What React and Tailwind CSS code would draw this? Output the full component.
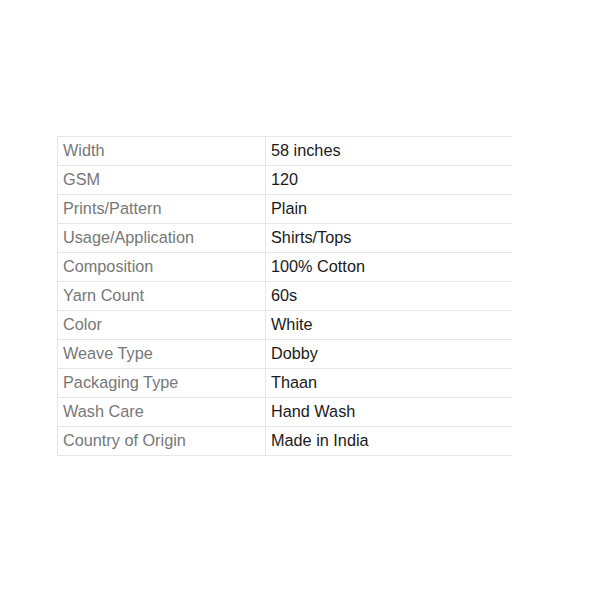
import React from "react";

const rows = [
  ["Width", "58 inches"],
  ["GSM", "120"],
  ["Prints/Pattern", "Plain"],
  ["Usage/Application", "Shirts/Tops"],
  ["Composition", "100% Cotton"],
  ["Yarn Count", "60s"],
  ["Color", "White"],
  ["Weave Type", "Dobby"],
  ["Packaging Type", "Thaan"],
  ["Wash Care", "Hand Wash"],
  ["Country of Origin", "Made in India"],
];

export default function App() {
  return (
    <div className="w-[594px] h-[596px] bg-white pt-[136px] pl-[57px]" style={{ fontFamily: '"Liberation Sans", Arial, sans-serif' }}>
      <div className="w-[455px] border-b border-[#e6e6e6]">
        {rows.map(([k, v]) => (
          <div key={k} className="flex h-[29px] border-t border-[#e6e6e6] text-[16.25px] leading-[27px]">
            <div className="w-[209px] border-l border-r border-[#e6e6e6] pl-[5px] text-[#777777]">{k}</div>
            <div className="flex-1 pl-[5px] text-[#1a1a1a]">{v}</div>
          </div>
        ))}
      </div>
    </div>
  );
}
